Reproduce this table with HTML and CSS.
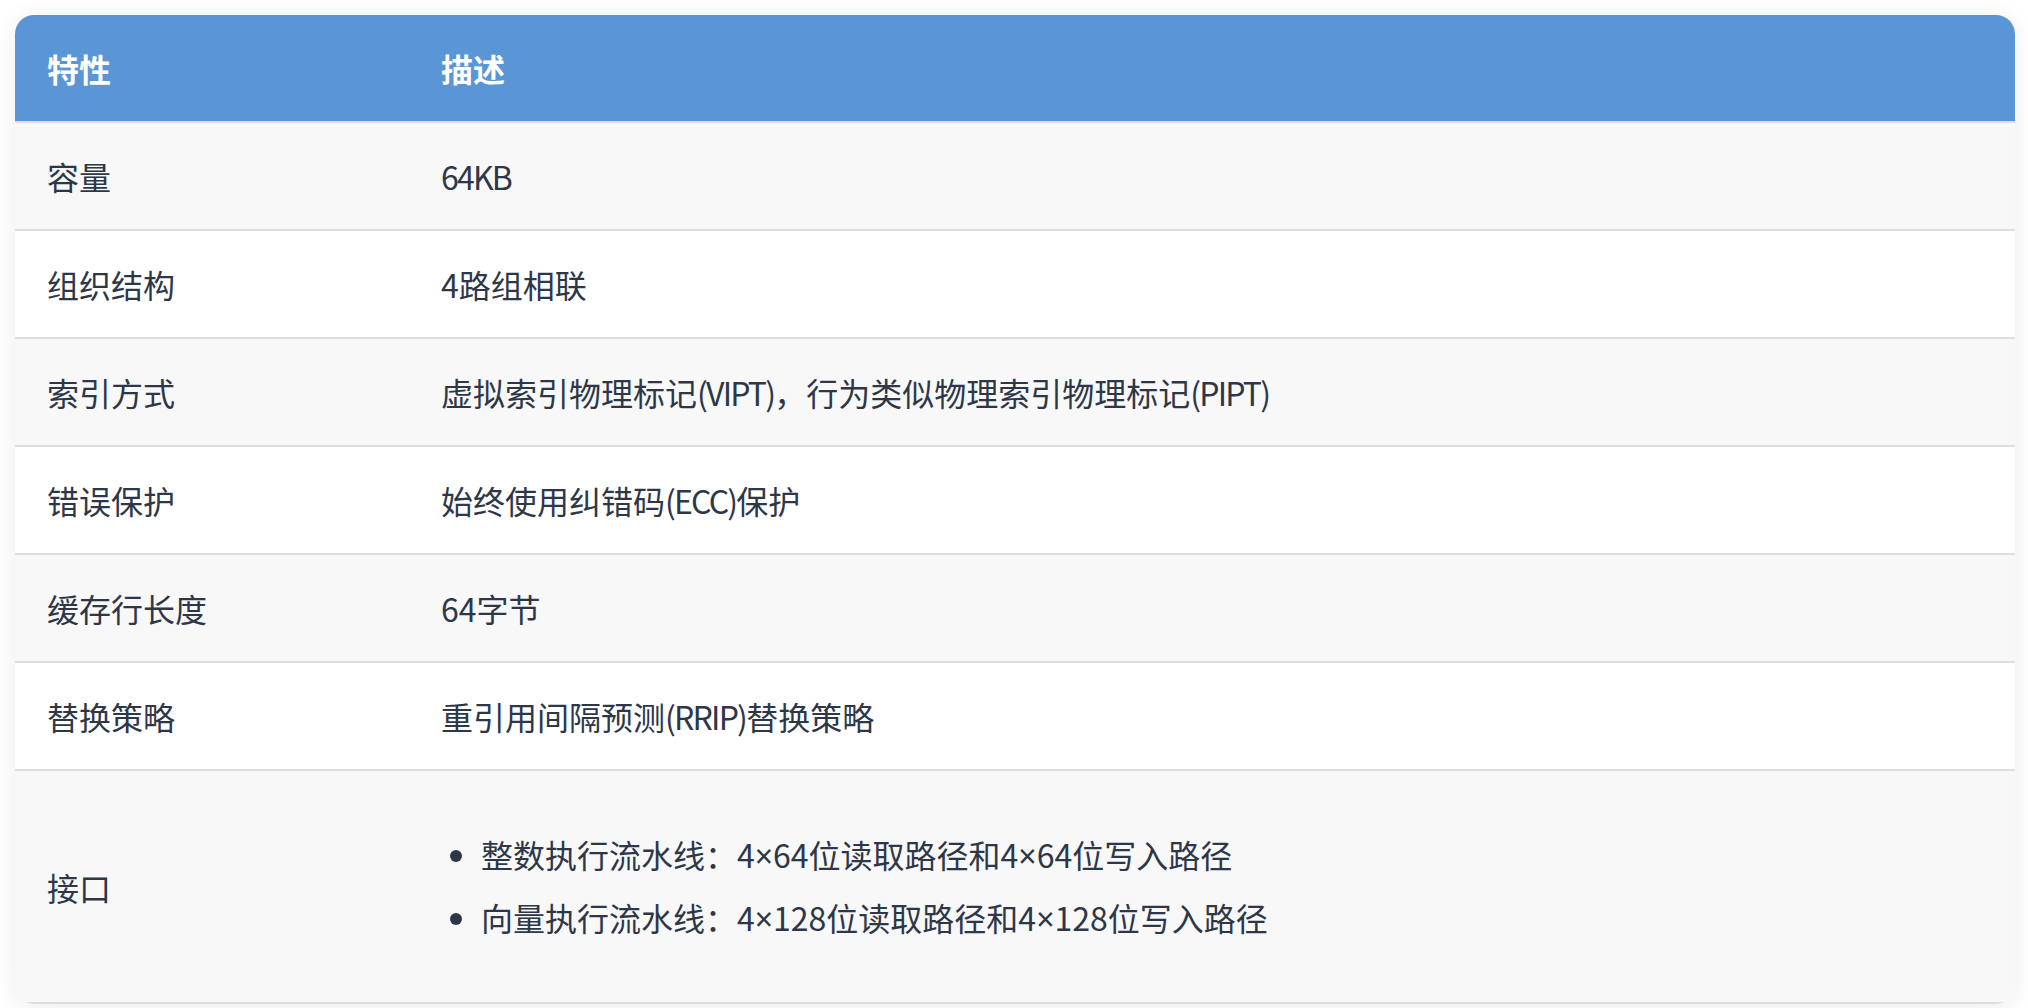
FILE: index.html
```html
<!DOCTYPE html>
<html lang="zh-CN">
<head>
<meta charset="utf-8">
<title>特性</title>
<link rel="stylesheet" href="styles.css">
</head>
<body>
<div class="card">
  <table class="spec">
    <thead>
      <tr><th class="col-key">特性</th><th>描述</th></tr>
    </thead>
    <tbody>
      <tr><td>容量</td><td><span class="lat">64KB</span></td></tr>
      <tr><td>组织结构</td><td>4路组相联</td></tr>
      <tr><td>索引方式</td><td>虚拟索引物理标记<span class="lat">(VIPT)</span>，行为类似物理索引物理标记<span class="lat">(PIPT)</span></td></tr>
      <tr><td>错误保护</td><td>始终使用纠错码<span class="lat">(ECC)</span>保护</td></tr>
      <tr><td>缓存行长度</td><td>64字节</td></tr>
      <tr><td>替换策略</td><td>重引用间隔预测<span class="lat">(RRIP)</span>替换策略</td></tr>
      <tr><td>接口</td><td>
        <ul class="ifaces">
          <li>整数执行流水线：4<span class="times">×</span>64位读取路径和4<span class="times">×</span>64位写入路径</li>
          <li>向量执行流水线：4<span class="times">×</span>128位读取路径和4<span class="times">×</span>128位写入路径</li>
        </ul>
      </td></tr>
    </tbody>
  </table>
</div>
</body>
</html>
```

FILE: styles.css
```css
html, body {
  margin: 0;
  background: #ffffff;
}
body {
  padding: 15px 13px 8px 15px;
  font-family: "Noto Sans CJK SC", "Noto Sans", sans-serif;
  color: #2d3748;
}
.card {
  width: 2000px;
  border-radius: 19px;
  overflow: hidden;
  box-shadow: 0 3px 24px rgba(0, 0, 0, 0.08);
  background: #ffffff;
}
.spec {
  width: 100%;
  border-collapse: collapse;
  table-layout: fixed;
  font-size: 32px;
  line-height: 48px;
}
.spec th {
  background: #5a95d6;
  color: #ffffff;
  font-weight: 700;
  text-align: left;
  padding: 29px 32px;
  border-bottom: 2px solid #dddddd;
}
.spec .col-key {
  width: 330px;
}
.spec td {
  padding: 29px 32px;
  text-align: left;
  vertical-align: middle;
  border-bottom: 2px solid #dddddd;
}
.spec tbody tr:nth-child(odd) {
  background: #f8f8f8;
}
.spec tbody tr:nth-child(even) {
  background: #ffffff;
}
.lat {
  letter-spacing: -1.8px;
}
.ifaces {
  margin: 30px 0;
  padding-left: 40px;
}
.ifaces li + li {
  margin-top: 13px;
}
.times {
  font-family: "Noto Sans", sans-serif;
}
```
